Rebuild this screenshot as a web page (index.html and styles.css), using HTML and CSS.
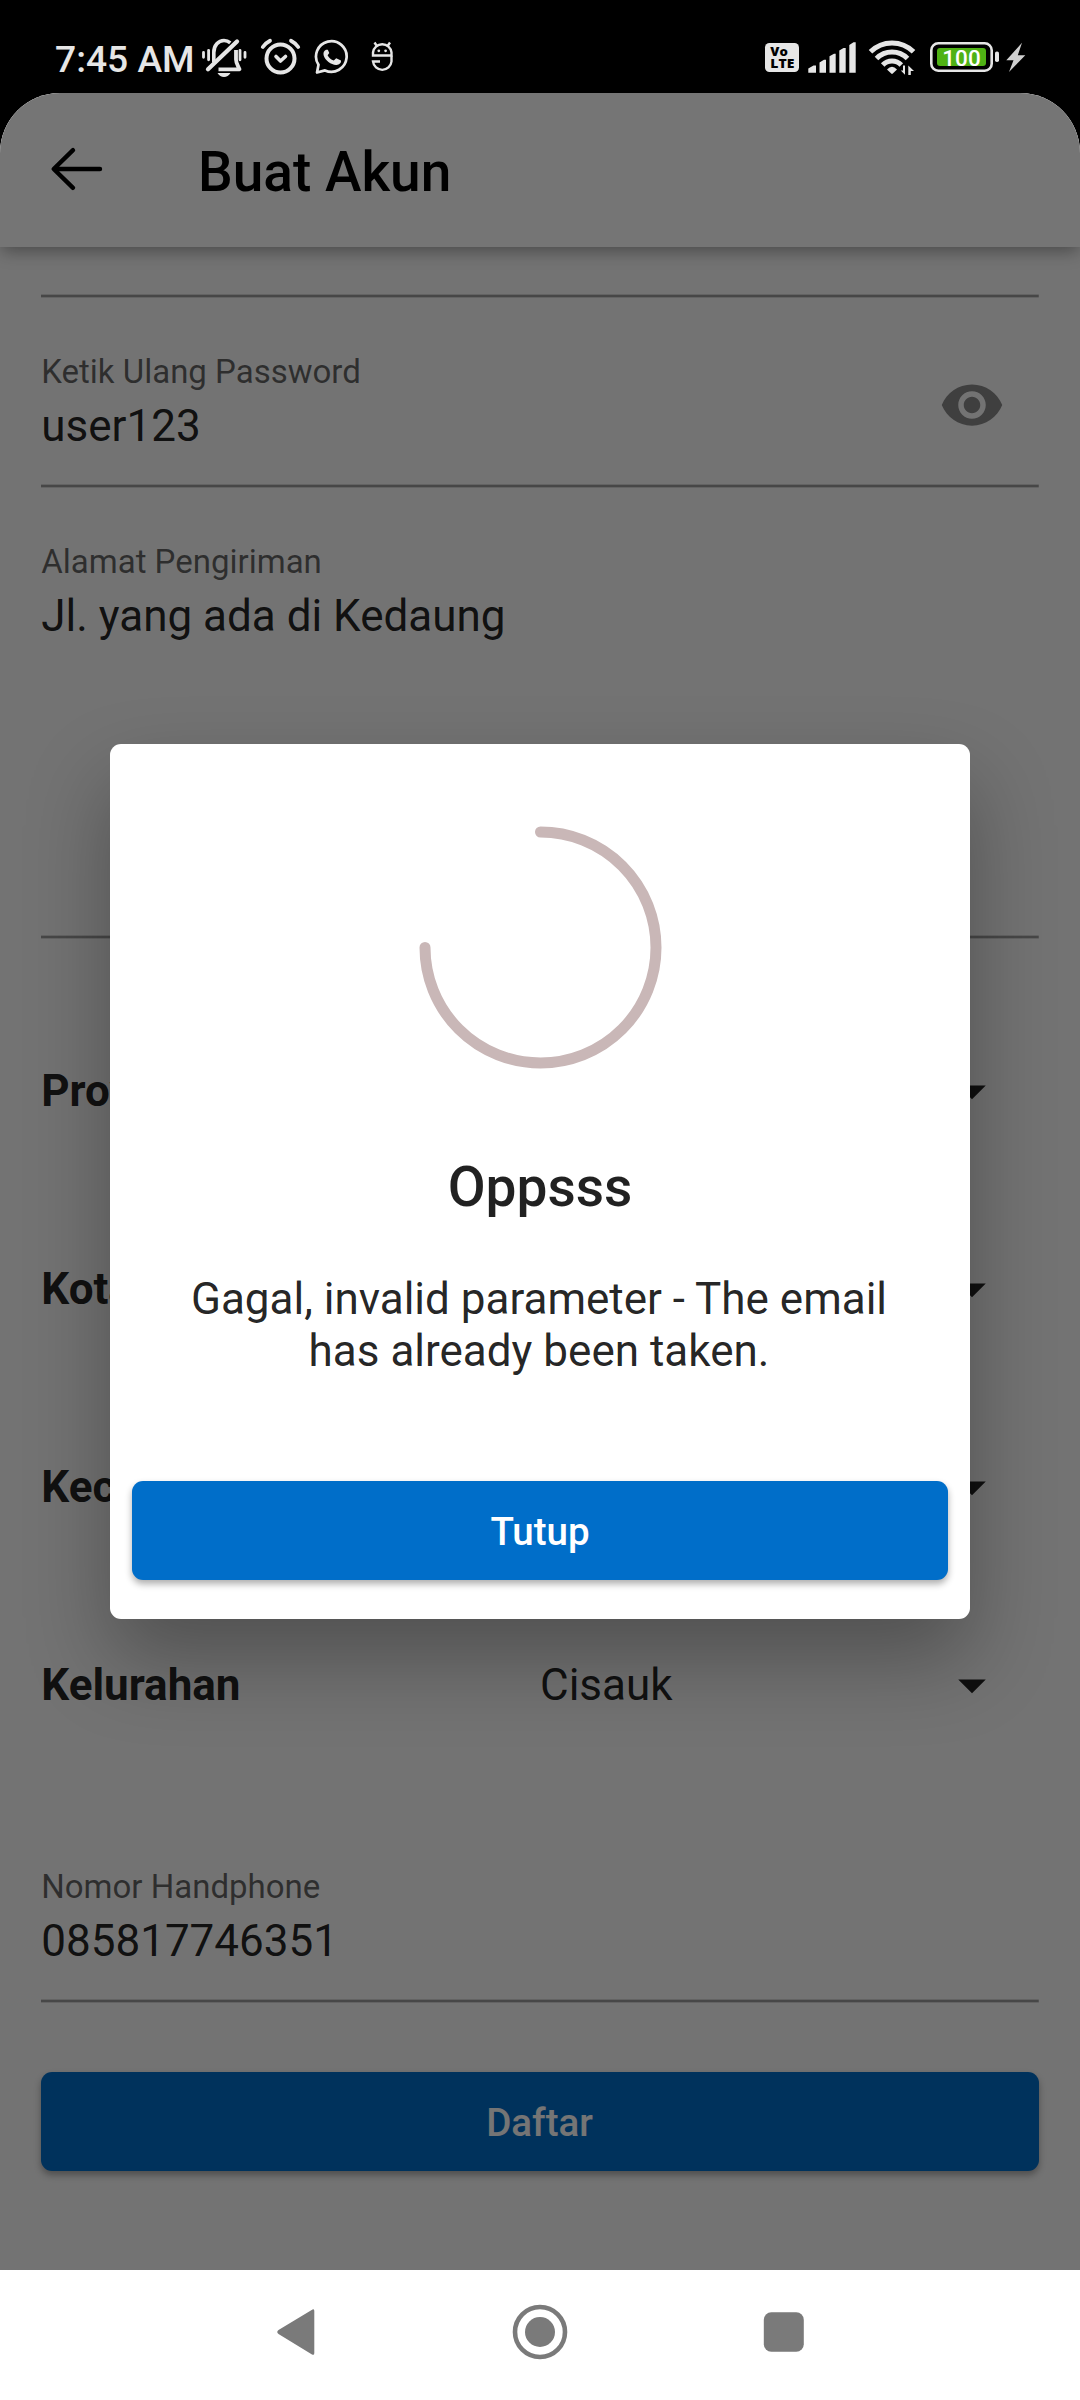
FILE: index.html
```html
<!DOCTYPE html>
<html lang="id">
<head>
<meta charset="utf-8">
<title>Buat Akun</title>
<link rel="stylesheet" href="styles.css">
</head>
<body>
<div class="status">
  <div class="status-left">
    <span class="clock">7:45 AM</span>
    <svg class="ic-mute" width="48" height="44" viewBox="200 36 48 44" fill="none" stroke="#e6e6e6">
      <path d="M213.800 62.500V52.500C213.800 45 218.500 40.500 224 40.500C226.500 40.500 228.500 41.300 230.300 42.800" stroke-width="3.600"/>
      <path d="M236 50V59.500C236 63 238 65.500 239.500 69.300H218.500" stroke-width="3.800" stroke-linejoin="round"/>
      <path d="M208 69.300L237 41.500" stroke-width="4.300" stroke-linecap="round"/>
      <path d="M203.500 52.500v4.800M208.600 50.300v9.500M240 50.300v9.500M245 52.500v4.800" stroke-width="2.800" stroke-linecap="round"/>
      <path d="M217.500 73H230.500Q228 77 224 77T217.500 73Z" fill="#e6e6e6" stroke="none"/>
    </svg>
    <svg class="ic-alarm" width="43" height="44" viewBox="259 36 43 44" fill="none" stroke="#e6e6e6" stroke-linecap="round">
      <circle cx="280.500" cy="58.500" r="14" stroke-width="4"/>
      <path d="M276 56.500L280.500 61L285.500 56.500" stroke-width="3.600" stroke-linejoin="round"/>
      <path d="M262.800 47Q265.500 43 270 40.700M298.200 47Q295.500 43 291 40.700" stroke-width="3.800"/>
    </svg>
    <svg class="ic-chat" width="37" height="44" viewBox="314 36 37 44">
      <path d="M318.500 64.800A15.300 15.300 0 1 1 325 70.400L317 72.500Z" fill="none" stroke="#e6e6e6" stroke-width="2.700" stroke-linejoin="round"/>
      <path d="M326 49.800C323.800 50.800 323 53 323.700 55.600C325 60.500 331.500 65.300 336.500 65C339.500 64.800 341.300 62.800 341 60.500L336.200 58.200L333.800 60.600C331 59.600 328.800 57.600 327.600 55.200L329.300 53L327.800 49.800Z" fill="#e6e6e6"/>
    </svg>
    <svg class="ic-robot" width="25" height="44" viewBox="370 36 25 44" fill="none" stroke="#e6e6e6" stroke-width="2.400">
      <path d="M392.600 55.500H373V52.500A9.300 9.200 0 0 1 391.500 52.500V55.500M374.500 42.500L376.500 45.500M390 42.500L388 45.500"/>
      <path d="M391.500 55.500V61.500A9.300 9.300 0 0 1 373 61.500H380"/>
      <circle cx="378.800" cy="50.800" r="1.400" fill="#e6e6e6" stroke="none"/>
      <circle cx="385.600" cy="50.800" r="1.400" fill="#e6e6e6" stroke="none"/>
    </svg>
  </div>
  <div class="status-right">
    <svg width="36" height="44" viewBox="764 36 36 44">
      <rect x="765" y="43" width="34" height="29" rx="4.500" fill="#e6e6e6"/>
      <text class="volte" x="770.300" y="56" textLength="17.500" lengthAdjust="spacingAndGlyphs">Vo</text>
      <text class="volte" x="770.300" y="68.300" textLength="24" lengthAdjust="spacingAndGlyphs">LTE</text>
    </svg>
    <svg class="ic-signal" width="49" height="44" viewBox="808 36 49 44" fill="#e6e6e6">
      <path d="M808.300 68.500L813.500 65.500H816V72.700H808.300ZM819.500 62.500L824 59.800H826V72.700H819.500ZM829.500 56.300L834 53.800H835.700V72.700H829.500ZM839.300 50.500L843.500 48H845.700V72.700H839.300ZM849.300 45L853.500 42.200H855.700V72.700H849.300Z"/>
    </svg>
    <svg class="ic-wifi" width="48" height="44" viewBox="868 36 48 44" fill="none" stroke="#e6e6e6">
      <path d="M870.500 51.800A30.500 30.500 0 0 1 913.500 51.800" stroke-width="5"/>
      <path d="M876.500 58.500A21.800 21.800 0 0 1 907.500 58.500" stroke-width="5"/>
      <path d="M882.700 65A13 13 0 0 1 901.300 65" stroke-width="5"/>
      <path d="M887 69.500Q892 64 897 69.500L892.800 73.600Q892 74.300 891.200 73.600Z" fill="#e6e6e6" stroke="none"/>
      <path d="M905 65.500V74.800L900.800 70.500H903V65.500ZM908.300 75V65.500L914 71H910.800V75Z" fill="#e6e6e6" stroke="none"/>
    </svg>
    <svg class="ic-battery" width="71" height="44" viewBox="929 36 71 44">
      <rect x="931.300" y="43.300" width="60.400" height="27.400" rx="7" fill="none" stroke="#e6e6e6" stroke-width="2.600"/>
      <rect x="937" y="48" width="49" height="18" rx="3" fill="#4fb214"/>
      <rect x="995" y="51.500" width="4" height="10.500" rx="1.800" fill="#e6e6e6"/>
      <text class="charge" x="961.500" y="65.500" text-anchor="middle">100</text>
    </svg>
    <svg class="ic-bolt" width="21" height="44" viewBox="1005 36 21 44">
      <path d="M1022 42.800L1006.300 60.300H1013.500L1009 72L1025.300 55.200H1017.800Z" fill="#d0d0d0"/>
    </svg>
  </div>
</div>

<div class="app">
  <header class="appbar">
    <svg class="back" width="56" height="48" viewBox="0 0 56 48" fill="none" stroke="#000" stroke-width="4.400" stroke-linecap="round" stroke-linejoin="round">
      <path d="M25 5.200L5.700 24L25 42.800M6 24H52"/>
    </svg>
    <h1>Buat Akun</h1>
  </header>

  <main class="form">
    <div class="field field-cut"></div>
    <div class="field field-eye">
      <div>
        <label>Ketik Ulang Password</label>
        <div class="value">user123</div>
      </div>
      <svg class="eye" width="66" height="66" viewBox="0 0 24 24">
        <path d="M12 4.500C7 4.500 2.730 7.610 1 12c1.730 4.390 6 7.500 11 7.500s9.270-3.110 11-7.500c-1.730-4.390-6-7.500-11-7.500zM12 17c-2.760 0-5-2.240-5-5s2.240-5 5-5 5 2.240 5 5-2.240 5-5 5zm0-8c-1.660 0-3 1.340-3 3s1.340 3 3 3 3-1.340 3-3-1.340-3-3-3z"/>
      </svg>
    </div>
    <div class="field field-address">
      <label>Alamat Pengiriman</label>
      <div class="value">Jl. yang ada di Kedaung</div>
    </div>

    <div class="selects">
      <div class="select"><b>Provinsi</b><span></span><svg width="66" height="66" viewBox="0 0 24 24"><path d="M7 10l5 5 5-5z"/></svg></div>
      <div class="select"><b>Kota</b><span></span><svg width="66" height="66" viewBox="0 0 24 24"><path d="M7 10l5 5 5-5z"/></svg></div>
      <div class="select"><b>Kecamatan</b><span></span><svg width="66" height="66" viewBox="0 0 24 24"><path d="M7 10l5 5 5-5z"/></svg></div>
      <div class="select"><b>Kelurahan</b><span>Cisauk</span><svg width="66" height="66" viewBox="0 0 24 24"><path d="M7 10l5 5 5-5z"/></svg></div>
    </div>

    <div class="field">
      <label>Nomor Handphone</label>
      <div class="value">085817746351</div>
    </div>
    <button class="btn btn-submit">Daftar</button>
  </main>

  <div class="scrim">
    <div class="dialog">
      <svg class="ring" width="243" height="243" viewBox="0 0 243 243" fill="none" stroke="#c9b7b7" stroke-width="11" stroke-linecap="round">
        <path d="M121.500 6A115.500 115.500 0 1 1 6 121.500"/>
      </svg>
      <h2>Oppsss</h2>
      <p>Gagal, invalid parameter - The email has already been taken.</p>
      <button class="btn btn-close">Tutup</button>
    </div>
  </div>
</div>

<nav class="nav">
  <svg width="56" height="56" viewBox="0 0 56 56"><path d="M44.500 5.500Q46.300 4.300 46.300 7V49Q46.300 51.700 44 50.500L10.500 30Q8 28 10.500 26Z" fill="#7a7a7a"/></svg>
  <svg width="56" height="56" viewBox="0 0 56 56"><circle cx="28" cy="28" r="25" fill="none" stroke="#7a7a7a" stroke-width="4.600"/><circle cx="28" cy="28" r="15" fill="#7a7a7a"/></svg>
  <svg width="56" height="56" viewBox="0 0 56 56"><rect x="7.800" y="8.200" width="40" height="39.600" rx="7.500" fill="#7a7a7a"/></svg>
</nav>
</body>
</html>
```
FILE: styles.css
```css
* { box-sizing: border-box; }
body {
  margin: 0;
  width: 1080px;
  height: 2400px;
  background: #000;
  font-family: Roboto, "Liberation Sans", sans-serif;
  overflow: hidden;
}
svg { display: block; flex: none; }

/* status bar */
.status {
  height: 93px;
  padding: 36px 54px 0 55px;
  display: flex;
  justify-content: space-between;
}
.status-left, .status-right { display: flex; }
.clock {
  width: 145px;
  font-size: 37.2px;
  line-height: 46px;
  font-weight: 500;
  color: #e6e6e6;
  white-space: nowrap;
}
.ic-alarm { margin-left: 11px; }
.ic-chat { margin-left: 12px; }
.ic-robot { margin-left: 19px; }
.ic-signal { margin-left: 8px; }
.ic-wifi { margin-left: 11px; }
.ic-battery { margin-left: 13px; }
.ic-bolt { margin-left: 5px; }
.volte { font: 800 12.2px "Open Sans", sans-serif; fill: #000; }
.charge { font: 500 22.5px Roboto, sans-serif; fill: #fff; }

/* app */
.app {
  position: relative;
  height: 2177px;
  background: #fafafa;
  border-radius: 60px 60px 0 0;
  overflow: hidden;
}
.appbar {
  position: relative;
  height: 154px;
  padding-left: 48px;
  display: flex;
  align-items: center;
  background: #fff;
  box-shadow: 0 6px 16px -2px rgba(0, 0, 0, .36);
}
.back { margin-bottom: 2px; }
h1 {
  margin: 3px 0 0 94px;
  font-size: 55px;
  line-height: 64px;
  font-weight: 500;
  color: #000;
}
.form {
  padding: 0 41.25px;
  color: rgba(0, 0, 0, .87);
  font-size: 44px;
  line-height: 52px;
}
.field {
  height: 190px;
  padding-top: 54px;
  background: linear-gradient(rgba(0, 0, 0, .14) 0 1px, rgba(0, 0, 0, .38) 1px 3px, rgba(0, 0, 0, .14) 3px 4px) bottom / 100% 4px no-repeat;
}
.field label {
  display: block;
  font-size: 33px;
  line-height: 39px;
  color: rgba(0, 0, 0, .6);
}
.field .value { margin-top: 9px; }
.field-cut { height: 51px; padding: 0; }
.field-eye { display: flex; justify-content: space-between; }
.eye { margin: 20px 33.4px 0 0; fill: rgba(0, 0, 0, .45); }
.field-address { height: 451px; }
.selects { margin: 53px 0 29px; }
.select {
  height: 198px;
  display: grid;
  grid-template-columns: 498.75px 1fr 66px;
  padding-right: 33.4px;
  align-items: center;
}
.select b { font-weight: 700; }
.select svg { fill: rgba(0, 0, 0, .87); }

.btn {
  display: block;
  width: 100%;
  height: 99px;
  padding: 0;
  border: 0;
  border-radius: 11px;
  background: #006ec9;
  color: #fff;
  font: 500 38.5px/45px Roboto, "Liberation Sans", sans-serif;
  text-align: center;
  box-shadow: 0 4px 7px rgba(0, 0, 0, .32);
}
.btn-submit { margin-top: 69px; padding: 1px 1px 0 0; }
.btn-close { padding-top: 2px; }

/* dialog */
.scrim {
  position: absolute;
  inset: 0;
  display: flex;
  align-items: center;
  justify-content: center;
  background: rgba(0, 0, 0, .54);
}
.dialog {
  width: 860px;
  height: 875px;
  padding: 82px 22px 0;
  display: flex;
  flex-direction: column;
  align-items: center;
  background: #fff;
  border-radius: 11px;
  color: rgba(0, 0, 0, .87);
  text-align: center;
  box-shadow: 0 40px 84px rgba(0, 0, 0, .3);
}
h2 {
  margin: 86px 0 54px;
  font-size: 55px;
  line-height: 64px;
  font-weight: 500;
}
.dialog p {
  width: 720px;
  margin: 0 2px 104px 0;
  font-size: 44px;
  line-height: 52px;
}

/* system navigation */
.nav {
  height: 130px;
  padding: 0 1px 6px 0;
  display: grid;
  grid-template-columns: repeat(3, 244px);
  justify-content: center;
  place-items: center;
  align-content: center;
  background: #fff;
}
```
